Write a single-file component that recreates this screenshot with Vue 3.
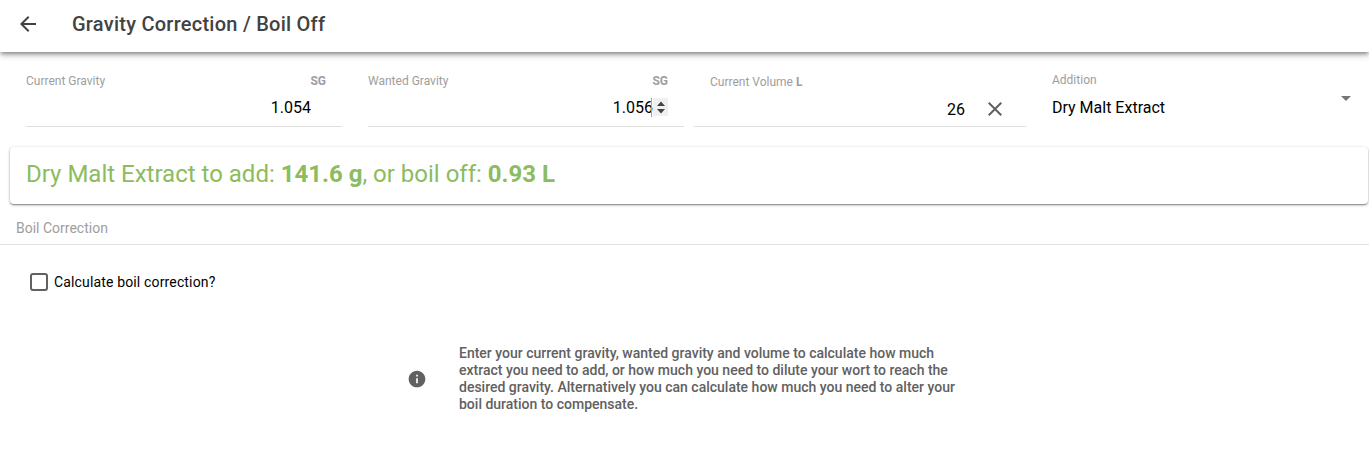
<template>
  <div class="page">
    <header class="toolbar">
      <button class="back" aria-label="Back">
        <svg width="24" height="24" viewBox="0 0 24 24"><path fill="#424242" d="M20 11H7.83l5.59-5.59L12 4l-8 8 8 8 1.41-1.41L7.83 13H20v-2z"/></svg>
      </button>
      <h1 class="title">Gravity Correction / Boil Off</h1>
    </header>

    <section class="fields">
      <div class="field gravity">
        <div class="label-row"><span>Current Gravity</span><b>SG</b></div>
        <div class="value-row"><span class="value">1.054</span></div>
      </div>
      <div class="field gravity">
        <div class="label-row"><span>Wanted Gravity</span><b>SG</b></div>
        <div class="value-row focused">
          <span class="value">1.056</span><i class="caret"></i>
          <span class="spinner">
            <svg width="12" height="15" viewBox="0 0 12 15"><path fill="#444" d="M6 1.5 10 6H2zM2 9h8l-4 4.5z"/></svg>
          </span>
        </div>
      </div>
      <div class="field volume">
        <div class="label-row"><span>Current Volume <b>L</b></span></div>
        <div class="value-row">
          <span class="value">26</span>
          <svg class="clear" width="24" height="24" viewBox="0 0 24 24"><path fill="#616161" d="M19 6.41 17.59 5 12 10.59 6.41 5 5 6.41 10.59 12 5 17.59 6.41 19 12 13.41 17.59 19 19 17.59 13.41 12z"/></svg>
        </div>
      </div>
      <div class="field select">
        <div class="label-row"><span>Addition</span></div>
        <div class="select-row">
          <span>Dry Malt Extract</span>
          <i class="arrow"></i>
        </div>
      </div>
    </section>

    <div class="result">Dry Malt Extract to add: <b>141.6 g</b>, or boil off: <b>0.93 L</b></div>

    <div class="section-title">Boil Correction</div>

    <label class="check">
      <i class="box"></i>
      <span>Calculate boil correction?</span>
    </label>

    <div class="info">
      <svg width="20" height="20" viewBox="0 0 24 24"><path fill="#616161" d="M12 2C6.48 2 2 6.48 2 12s4.48 10 10 10 10-4.48 10-10S17.52 2 12 2zm1 15h-2v-6h2v6zm0-8h-2V7h2v2z"/></svg>
      <p>Enter your current gravity, wanted gravity and volume to calculate how much extract you need to add, or how much you need to dilute your wort to reach the desired gravity. Alternatively you can calculate how much you need to alter your boil duration to compensate.</p>
    </div>
  </div>
</template>

<script setup>
</script>

<style>
html, body {
  margin: 0;
  background: #fff;
}
</style>

<style scoped>
.page {
  width: 1369px;
  height: 454px;
  overflow: hidden;
  font-family: Roboto, "Liberation Sans", sans-serif;
  color: #000;
  background: #fff;
}

/* toolbar */
.toolbar {
  display: flex;
  align-items: center;
  height: 52px;
  padding: 0 0 4px 16px;
  box-sizing: border-box;
  background: #fff;
  box-shadow: 0 2px 4px -1px rgba(0,0,0,.4), 0 4px 5px 0 rgba(0,0,0,.14), 0 1px 10px 0 rgba(0,0,0,.12);
}
.back {
  display: flex;
  padding: 0;
  border: 0;
  background: none;
}
.title {
  margin: 0 0 0 32px;
  font-size: 20px;
  font-weight: 500;
  color: #424242;
  letter-spacing: .25px;
}

/* inputs */
.fields {
  display: flex;
  padding: 22px 14px 0 26px;
  height: 73px;
}
.field {
  display: flex;
  flex-direction: column;
  height: 53px;
  box-sizing: border-box;
}
.gravity {
  width: 316px;
  border-bottom: 1px solid #e0e0e0;
  margin-right: 26px;
}
.gravity + .gravity {
  margin-right: 10px;
}
.volume {
  width: 332px;
  border-bottom: 1px solid #e0e0e0;
  margin-right: 26px;
}
.select {
  flex: 1;
}
.label-row {
  display: flex;
  justify-content: space-between;
  padding-right: 16px;
  font-size: 12px;
  line-height: 14px;
  color: #9e9e9e;
}
.value-row {
  display: flex;
  justify-content: flex-end;
  align-items: center;
  height: 24px;
  margin-top: 7px;
  padding-right: 31px;
  font-size: 16px;
}
.focused {
  position: relative;
}
.caret {
  width: 1px;
  height: 19px;
  margin: 0 1px 0 -2px;
  background: #8bc34a;
}
.spinner {
  position: absolute;
  right: 16px;
  top: 3px;
  display: flex;
  align-items: center;
  justify-content: center;
  width: 15px;
  height: 18px;
  background: #f0f0f0;
}
.volume .label-row {
  margin-top: 1px;
  padding-left: 16px;
}
.volume .value-row {
  padding-right: 19px;
  margin-top: 8px;
}
.clear {
  margin-left: 18px;
}
.select .label-row {
  margin-top: -1px;
}
.select-row {
  display: flex;
  justify-content: space-between;
  height: 24px;
  margin-top: 9px;
  line-height: 24px;
  font-size: 16px;
}
.arrow {
  width: 0;
  height: 0;
  margin: 0 4px 0 0;
  border-left: 5px solid transparent;
  border-right: 5px solid transparent;
  border-top: 5px solid #757575;
}

/* result card */
.result {
  height: 57px;
  margin: 0 1px 0 10px;
  padding-left: 16px;
  box-sizing: border-box;
  border-radius: 4px;
  font-size: 24px;
  line-height: 54px;
  color: #8bbc5f;
  box-shadow: 0 1px 3px 0 rgba(0,0,0,.35), 0 1px 1px 0 rgba(0,0,0,.14), 0 2px 1px -1px rgba(0,0,0,.12);
}
.result b {
  font-weight: 700;
}

.section-title {
  margin-top: 14px;
  padding: 0 0 6px 16px;
  height: 20px;
  line-height: 20px;
  font-size: 14px;
  color: #9e9e9e;
  border-bottom: 1px solid #e0e0e0;
}

.check {
  display: flex;
  align-items: center;
  gap: 6px;
  margin: 28px 0 0 30px;
  font-size: 14px;
  letter-spacing: .15px;
}
.box {
  width: 18px;
  height: 18px;
  box-sizing: border-box;
  border: 2px solid #616161;
  border-radius: 3px;
}

.info {
  display: flex;
  align-items: center;
  margin: 54px 0 0 407px;
}
.info p {
  width: 500px;
  margin: 0 0 0 32px;
  font-size: 14px;
  font-weight: 500;
  line-height: 17px;
  color: #616161;
}
</style>
